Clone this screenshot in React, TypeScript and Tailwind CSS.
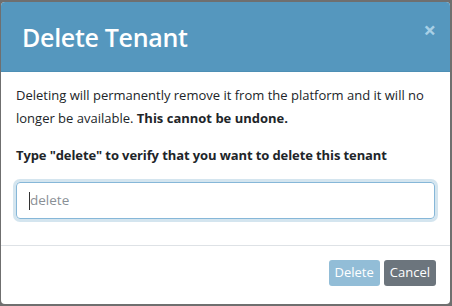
import React from "react";

export default function App() {
  return (
    <div className="w-[452px] h-[306px] bg-[#6f6f6f] pt-[2px] pl-[1px] pr-[2px] pb-[2px]" style={{ fontFamily: '"Open Sans", "Noto Sans", sans-serif' }}>
      <div className="h-full bg-white rounded-[4px] overflow-hidden flex flex-col">
        <div className="h-[70px] bg-[#5597be] flex items-start justify-between pl-[21px] pr-[14px] border-b border-[#4d8fb5]">
          <div className="text-white text-[25px] font-semibold leading-none mt-[23px] tracking-[-0.3px]">Delete Tenant</div>
          <div className="text-[#a8d0e6] text-[22px] font-bold leading-none mt-[16px]">×</div>
        </div>
        <div className="px-[15px] pt-[12px] text-[13px] text-[#212529] leading-[23px]">
          <p>
            Deleting will permanently remove it from the platform and it will no longer be available. <span className="font-bold">This cannot be undone.</span>
          </p>
          <p className="font-bold mt-[14px] tracking-[-0.1px]">Type "delete" to verify that you want to delete this tenant</p>
          <div className="mt-[15px] h-[37px] rounded-[4px] border border-[#86b7d8] shadow-[0_0_0_3px_rgba(85,151,190,0.25)] flex items-center pl-[12px]">
            <span className="w-px h-[18px] bg-[#333]" />
            <span className="text-[#8a9096] text-[13.5px]">delete</span>
          </div>
        </div>
        <div className="mt-[26px] border-t border-[#dee2e6] flex justify-end gap-[4px] pr-[14px] pt-[14px]">
          <button className="h-[26px] px-[6px] rounded-[3px] bg-[#92bdd7] text-white text-[13px]">Delete</button>
          <button className="h-[26px] px-[6px] rounded-[3px] bg-[#6c757d] text-white text-[13px]">Cancel</button>
        </div>
      </div>
    </div>
  );
}
